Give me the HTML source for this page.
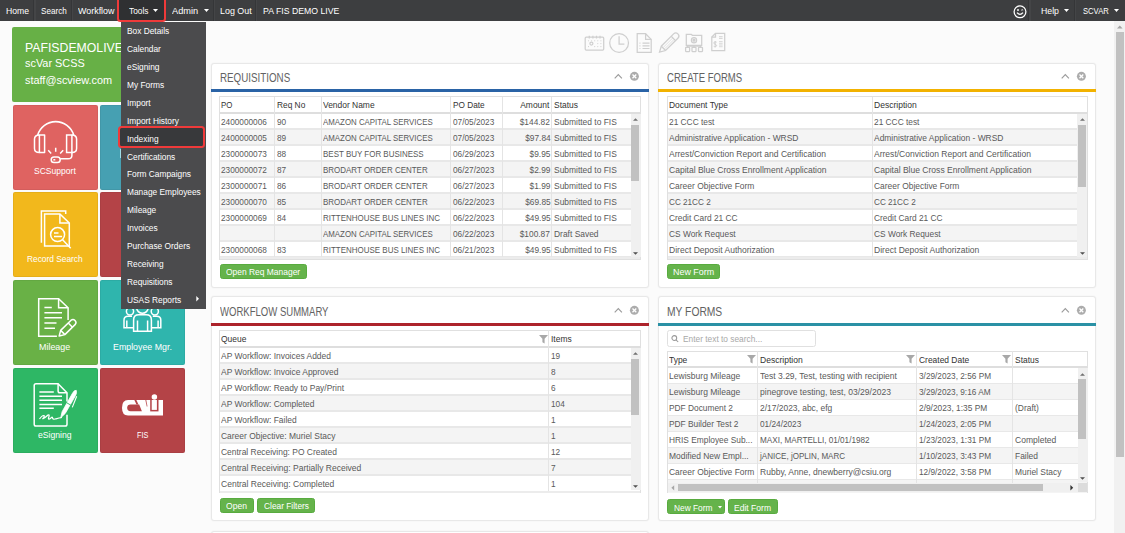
<!DOCTYPE html><html><head><meta charset="utf-8"><style>
*{box-sizing:border-box;margin:0;padding:0}
html,body{width:1125px;height:533px;overflow:hidden;background:#fbfbfb;font-family:"Liberation Sans",sans-serif;color:#555;position:relative}
.a{position:absolute}
.t{position:absolute;white-space:nowrap;line-height:1}
svg{position:absolute;overflow:visible}
</style></head><body>
<div class="a" style="left:0px;top:0px;width:1125px;height:21px;background:#3d3e40;"></div>
<div class="a" style="left:33px;top:0px;width:1px;height:21px;background:#353638;"></div>
<div class="a" style="left:34px;top:0px;width:1.7px;height:21px;background:#444547;"></div>
<div class="a" style="left:70.7px;top:0px;width:1px;height:21px;background:#353638;"></div>
<div class="a" style="left:71.7px;top:0px;width:1.7px;height:21px;background:#444547;"></div>
<div class="a" style="left:212.7px;top:0px;width:1px;height:21px;background:#353638;"></div>
<div class="a" style="left:213.7px;top:0px;width:1.7px;height:21px;background:#444547;"></div>
<div class="a" style="left:254.8px;top:0px;width:1px;height:21px;background:#353638;"></div>
<div class="a" style="left:255.8px;top:0px;width:1.7px;height:21px;background:#444547;"></div>
<div class="a" style="left:1028.3px;top:0px;width:1px;height:21px;background:#353638;"></div>
<div class="a" style="left:1029.3px;top:0px;width:1.7px;height:21px;background:#444547;"></div>
<div class="a" style="left:1073.5px;top:0px;width:1px;height:21px;background:#353638;"></div>
<div class="a" style="left:1074.5px;top:0px;width:1.7px;height:21px;background:#444547;"></div>
<div class="a" style="left:118.5px;top:0px;width:46.5px;height:21px;background:#2f3032;"></div>
<div class="t" style="left:6px;top:5.7px;font-size:9.8px;color:#fff;transform:scaleX(0.88);transform-origin:0 0;">Home</div>
<div class="t" style="left:40.7px;top:5.7px;font-size:9.8px;color:#fff;transform:scaleX(0.83);transform-origin:0 0;">Search</div>
<div class="t" style="left:78px;top:5.7px;font-size:9.8px;color:#fff;transform:scaleX(0.91);transform-origin:0 0;">Workflow</div>
<div class="t" style="left:128.6px;top:5.7px;font-size:9.8px;color:#fff;transform:scaleX(0.85);transform-origin:0 0;">Tools</div>
<div class="t" style="left:172px;top:5.7px;font-size:9.8px;color:#fff;transform:scaleX(0.94);transform-origin:0 0;">Admin</div>
<div class="t" style="left:219.6px;top:5.7px;font-size:9.8px;color:#fff;transform:scaleX(0.91);transform-origin:0 0;">Log Out</div>
<div class="t" style="left:262.6px;top:5.7px;font-size:9.8px;color:#fff;transform:scaleX(0.89);transform-origin:0 0;">PA FIS DEMO LIVE</div>
<div class="t" style="left:1041px;top:5.7px;font-size:9.8px;color:#fff;transform:scaleX(0.89);transform-origin:0 0;">Help</div>
<div class="t" style="left:1083px;top:5.7px;font-size:9.8px;color:#fff;transform:scaleX(0.78);transform-origin:0 0;">SCVAR</div>
<svg style="left:153px;top:9.3px" width="5" height="3"><path d="M0 0H5L2.5 3Z" fill="#fff"/></svg>
<svg style="left:203.5px;top:9.3px" width="5" height="3"><path d="M0 0H5L2.5 3Z" fill="#fff"/></svg>
<svg style="left:1064px;top:9.3px" width="5" height="3"><path d="M0 0H5L2.5 3Z" fill="#fff"/></svg>
<svg style="left:1113.6px;top:9.3px" width="5" height="3"><path d="M0 0H5L2.5 3Z" fill="#fff"/></svg>
<svg style="left:1012.5px;top:5px" width="15" height="14" viewBox="0 0 15 14"><circle cx="7" cy="6.8" r="5.9" fill="none" stroke="#fff" stroke-width="1.25"/><path d="M4 7.6 Q7 11 10 7.6" fill="none" stroke="#fff" stroke-width="1.3"/><circle cx="5" cy="5" r="0.95" fill="#fff"/><path d="M8.3 5.2 Q9.2 4.3 10.1 5.2" fill="none" stroke="#fff" stroke-width="1"/></svg>
<div class="a" style="left:1114px;top:21px;width:11px;height:512px;background:#f1f1f1;"></div>
<div class="a" style="left:1116px;top:32px;width:7.8px;height:425.3px;background:#c1c1c1;"></div>
<svg style="left:1116.6px;top:25px" width="6" height="4"><path d="M0 3.4H5.6L2.8 0.4Z" fill="#a3a3a3"/></svg>
<svg style="left:0;top:0" width="1125" height="60" viewBox="0 0 1125 60" fill="none" stroke="#cfcfcf" stroke-width="1.25">
<rect x="585.2" y="37.2" width="18.5" height="12.8" rx="1"/>
<path d="M589.3 35.8v2.6M592.9 35.8v2.6M596.5 35.8v2.6M600 35.8v2.6"/>
<g fill="#cfcfcf" stroke="none">
<circle cx="588.5" cy="40.8" r=".55"/><circle cx="591.6" cy="40.8" r=".55"/><circle cx="594.7" cy="40.8" r=".55"/><circle cx="597.8" cy="40.8" r=".55"/><circle cx="600.9" cy="40.8" r=".55"/>
<circle cx="597.8" cy="43.6" r=".55"/><circle cx="600.9" cy="43.6" r=".55"/>
<circle cx="588.5" cy="46.6" r=".55"/><circle cx="594.7" cy="46.6" r=".55"/><circle cx="597.8" cy="46.6" r=".55"/><circle cx="600.9" cy="46.6" r=".55"/></g>
<circle cx="591.4" cy="43.6" r="1.5"/>
<circle cx="619.1" cy="43" r="9.4"/>
<path d="M619.1 36.3v7.7h5.3"/>
<path d="M637.2 33.7h8.4l5.6 5.7v13h-14z"/><path d="M645.6 33.7v5.7h5.6"/>
<path d="M642.5 43.2h7M642.5 45.9h7M642.5 48.5h7M639.5 43.2h.9M639.5 45.9h.9M639.5 48.5h.9" stroke-width="1.2"/>
<path d="M659.5 52.2 L661.3 46.2 L673.6 33.9 A2.6 2.6 0 0 1 677.9 38.2 L665.6 50.5 Z"/><path d="M661.3 46.2 L665.6 50.5 M671.2 36.3 L675.5 40.6"/>
<path d="M663.5 47.2 L672.7 38 M664.9 48.6 L674.1 39.4" stroke-width=".6"/>
<path d="M686.3 34.3h5l1 1h9.4v10h-15.4z"/><circle cx="694" cy="40.2" r="2.6"/><circle cx="694" cy="40.2" r="1" fill="#cfcfcf"/>
<path d="M686.5 46h15M687.5 46v1M694 46v1M700.5 46v1"/>
<rect x="685.6" y="47.3" width="4" height="4.2" rx=".4"/><rect x="692" y="47.3" width="4" height="4.2" rx=".4"/><rect x="698.5" y="47.3" width="4" height="4.2" rx=".4"/>
<path d="M715.5 33.3h9.2v17.4h-12.9v-13.7z"/><path d="M715.5 33.3v3.7h-3.7"/>
<path d="M719 36.7h3.6M719 38.4h3.6" stroke-width=".9"/>
<path d="M719 41.6h3.6M719 43.3h3.6M719 45h3.6M719 46.7h3.6" stroke-width=".8"/>
<path d="M716.6 42.2c-.6-.5-2.8-.7-2.8.8 0 1.5 2.8 1.1 2.8 2.6 0 1.3-2.2 1.4-2.9.7M715.2 41v6.3" stroke-width="1"/>
</svg>
<div class="a" style="left:12.2px;top:27.2px;width:172.8px;height:74.6px;background:#67b046;border-radius:2px"></div>
<div class="t" style="left:25px;top:40.53px;font-size:13.2px;color:#fff;transform:scaleX(0.93);transform-origin:0 0;">PAFISDEMOLIVE</div>
<div class="t" style="left:25px;top:58.47px;font-size:10.9px;color:#fff;transform:scaleX(1);transform-origin:0 0;">scVar SCSS</div>
<div class="t" style="left:25px;top:74.77px;font-size:10.9px;color:#fff;transform:scaleX(1);transform-origin:0 0;">staff@scview.com</div>
<div class="a" style="left:12.5px;top:104.5px;width:85px;height:85px;background:#df6361;border-radius:2px;box-shadow:inset 0 0 0 1px rgba(0,0,0,0.05)"></div>
<svg style="left:0;top:0" width="1125" height="533" viewBox="0 0 1125 533" fill="none" stroke="#fff" stroke-width="1.5">
<path d="M37.7 135 A18.8 18.8 0 0 1 73.7 135" stroke-width="1.6"/>
<path d="M39.4 134.9 H44.6 V152.5 H39.4 Z" stroke-linejoin="round"/>
<path d="M39.4 134.9 Q34.5 135 34.5 139 V148.5 Q34.5 152.5 39.4 152.5"/>
<path d="M71.9 134.9 H66.6 V152.5 H71.9 Z"/>
<path d="M71.9 134.9 Q76.6 135 76.6 139 V148.5 Q76.6 152.5 71.9 152.5"/>
<path d="M71.9 152.5 V155.5 Q71.9 158.8 68 158.8 H60.2"/>
<rect x="51.2" y="157" width="9" height="5.6" rx="2.8"/>
<path d="M53.3 159.8 H55.3"/>
<path d="M55.7 147.8 V151.8 M48.2 150.2 L51.2 153.4 M63.2 150.2 L60.2 153.4"/>
</svg>
<div class="t" style="left:34px;top:166.37px;font-size:9.6px;color:#fff;transform:scaleX(0.89);transform-origin:0 0;">SCSupport</div>
<div class="a" style="left:100px;top:104.5px;width:85px;height:85px;background:#46a0b2;border-radius:2px;box-shadow:inset 0 0 0 1px rgba(0,0,0,0.05)"></div>
<div class="a" style="left:119.6px;top:149px;width:1.4px;height:8.5px;background:#9fdde8;"></div>
<div class="a" style="left:12.5px;top:192px;width:85px;height:85px;background:#f2b81c;border-radius:2px;box-shadow:inset 0 0 0 1px rgba(0,0,0,0.05)"></div>
<svg style="left:0;top:0" width="1125" height="533" viewBox="0 0 1125 533" fill="none" stroke="#fff" stroke-width="1.5">
<path d="M41.4 242.8 V210.9 H65.7 V214"/>
<path d="M44.6 214 H59.9 L69.3 223 V246 H44.6 Z"/>
<path d="M59.9 214 V223 H69.3"/>
<circle cx="57.6" cy="234.6" r="7"/>
<path d="M54 232.9 H58.5 M54 236.5 H62.1"/>
<path d="M62.6 239.8 L70.7 248.2"/>
</svg>
<div class="t" style="left:27.15px;top:253.87px;font-size:9.6px;color:#fff;transform:scaleX(0.87);transform-origin:0 0;">Record Search</div>
<div class="a" style="left:100px;top:192px;width:85px;height:85px;background:#b44347;border-radius:2px;box-shadow:inset 0 0 0 1px rgba(0,0,0,0.05)"></div>
<div class="a" style="left:12.5px;top:280px;width:85px;height:85px;background:#69b146;border-radius:2px;box-shadow:inset 0 0 0 1px rgba(0,0,0,0.05)"></div>
<svg style="left:0;top:0" width="1125" height="533" viewBox="0 0 1125 533" fill="none" stroke="#fff" stroke-width="1.5">
<path d="M56.9 336.3 H38.7 V298.7 H58.6 L68.1 307.8 V320"/>
<path d="M58.6 298.7 V307.8 H68.1"/>
<path d="M44.4 307.6 H51.8 M44.4 312.7 H62 M44.4 317.8 H62 M44.4 323 H56.5 M44.4 328.2 H55"/>
<path d="M59.2 336 L60.67 330.36 L71.1 320.2 A3 3 0 0 1 75.3 324.4 L64.87 334.64 Z" stroke-linejoin="round"/>
<path d="M60.67 330.36 L64.87 334.64 M68.24 322.96 L72.44 327.24"/>
</svg>
<div class="t" style="left:39.35px;top:341.87px;font-size:9.6px;color:#fff;transform:scaleX(0.93);transform-origin:0 0;">Mileage</div>
<div class="a" style="left:100px;top:280px;width:85px;height:85px;background:#2fb5ad;border-radius:2px;box-shadow:inset 0 0 0 1px rgba(0,0,0,0.05)"></div>
<svg style="left:0;top:0" width="1125" height="533" viewBox="0 0 1125 533" fill="none" stroke="#fff" stroke-width="1.5">
<circle cx="142.4" cy="307.5" r="5.8"/>
<circle cx="130" cy="311.3" r="3.6"/>
<circle cx="154.8" cy="311.3" r="3.6"/>
<path d="M133.6 331.3 V320 Q133.6 314.8 138.8 314.8 H146.2 Q151.4 314.8 151.4 320 V331.3 Z"/>
<path d="M137.5 320.5 V331 M147.6 320.5 V331"/>
<path d="M133.2 327.8 H124 V320 Q124 316.2 128 316.2 H132"/>
<path d="M151.8 327.8 H160.8 V320 Q160.8 316.2 156.8 316.2 H152.8"/>
<path d="M126.8 320.5 V327.5 M158.1 320.5 V327.5"/>
</svg>
<div class="t" style="left:113.1px;top:341.87px;font-size:9.6px;color:#fff;transform:scaleX(0.92);transform-origin:0 0;">Employee Mgr.</div>
<div class="a" style="left:12.5px;top:368px;width:85px;height:85px;background:#2eb765;border-radius:2px;box-shadow:inset 0 0 0 1px rgba(0,0,0,0.05)"></div>
<svg style="left:0;top:0" width="1125" height="533" viewBox="0 0 1125 533" fill="none" stroke="#fff" stroke-width="1.5">
<path d="M67 401.6 V392.7 L58.1 383.8 H36 Q34.2 383.8 34.2 385.6 V424.2 Q34.2 426 36 426 H65.2 Q67 426 67 424.2 V414.7"/>
<path d="M58.1 383.8 V390.9 Q58.1 392.7 59.9 392.7 H67"/>
<path d="M39.4 392 H53.8 M39.4 396.2 H62 M39.4 400.3 H62 M39.4 404.5 H62 M39.4 408.3 H53.8"/>
<path d="M39.5 419 Q42 415.2 44 415.5 Q45 416.5 42.5 419 Q46 417 48 415 Q50 414 48.5 418 Q48 420.5 51 418 Q52.5 416 52.5 418 Q53 420 56 418.8 Q59 418 62 417.5" stroke-width="1.2"/>
<path d="M60.7 417.8 L62.1 411.69 L72.42 393.36 Q74.5 389.5 76.3 390.4 Q77 392 75.72 395.24 L65.24 413.47 Z" fill="#fff" stroke-width="0.8"/>
<path d="M66.5 402.7 L70.8 405.1" stroke="#2eb765" stroke-width="0.9"/>
<path d="M76.7 396.3 L72.3 407.4" stroke-width="1.1"/>
</svg>
<div class="t" style="left:38.1px;top:429.87px;font-size:9.6px;color:#fff;transform:scaleX(0.9);transform-origin:0 0;">eSigning</div>
<div class="a" style="left:100px;top:368px;width:85px;height:85px;background:#b44347;border-radius:2px;box-shadow:inset 0 0 0 1px rgba(0,0,0,0.05)"></div>
<svg style="left:0;top:0" width="1125" height="533" viewBox="0 0 1125 533" fill="none" stroke="#fff" stroke-width="1.5"><g stroke="none">
<path d="M128 400 H163 V415.6 H128 Q122 415.6 122 407.8 Q122 400 128 400 Z" fill="#fff"/>
<path d="M130.6 404.4 H139.2 L141.9 411.3 H130.6 A3.45 3.45 0 0 1 130.6 404.4 Z" fill="#b44347"/>
<path d="M134.4 400 H136.4 L138.4 404.4 H136.4 Z" fill="#b44347"/>
<path d="M145.3 400 H146.3 L147.5 406.5 H146.7 Z" fill="#c26266"/>
<rect x="150.2" y="400" width="8.3" height="11.4" fill="#b44347"/>
<rect x="151.7" y="400" width="5.2" height="9.9" fill="#fff"/>
<circle cx="154.4" cy="396.9" r="2.75" fill="#fff"/>
</g></svg>
<div class="t" style="left:136.85px;top:429.87px;font-size:9.6px;color:#fff;transform:scaleX(0.76);transform-origin:0 0;">FIS</div>
<div class="a" style="left:211px;top:63px;width:437.8px;height:224.6px;background:#fff;border:1px solid #e8e8e8;border-radius:3px;box-shadow:0 0 1.5px rgba(0,0,0,.07)"></div>
<div class="t" style="left:219.6px;top:71.85px;font-size:12.4px;color:#626262;transform:scaleX(0.79);transform-origin:0 0;">REQUISITIONS</div>
<div class="a" style="left:211px;top:89.4px;width:437.8px;height:2.7px;background:#2a63a6;"></div>
<svg style="left:0;top:0" width="1125" height="533" viewBox="0 0 1125 533"><path d="M614.7 78.35 L618.3 74.55 L621.9 78.35" fill="none" stroke="#9c9c9c" stroke-width="1.15"/><circle cx="634.4" cy="76.35" r="4.5" fill="#acacac"/><path d="M632.5 74.45 l3.8 3.8 M636.3 74.45 l-3.8 3.8" stroke="#fff" stroke-width="1.3"/></svg>
<div class="a" style="left:219.2px;top:96px;width:421.6px;height:163.8px;background:#fff;border:1px solid #e0e0e0"></div>
<div class="a" style="left:220.2px;top:129.3px;width:419.6px;height:16px;background:#f4f4f4;"></div>
<div class="a" style="left:220.2px;top:161.3px;width:419.6px;height:16px;background:#f4f4f4;"></div>
<div class="a" style="left:220.2px;top:193.3px;width:419.6px;height:16px;background:#f4f4f4;"></div>
<div class="a" style="left:220.2px;top:225.3px;width:419.6px;height:16px;background:#f4f4f4;"></div>
<div class="a" style="left:220.2px;top:128.4px;width:419.6px;height:1.5px;background:#e8e8e8;"></div>
<div class="a" style="left:220.2px;top:144.4px;width:419.6px;height:1.5px;background:#e8e8e8;"></div>
<div class="a" style="left:220.2px;top:160.4px;width:419.6px;height:1.5px;background:#e8e8e8;"></div>
<div class="a" style="left:220.2px;top:176.4px;width:419.6px;height:1.5px;background:#e8e8e8;"></div>
<div class="a" style="left:220.2px;top:192.4px;width:419.6px;height:1.5px;background:#e8e8e8;"></div>
<div class="a" style="left:220.2px;top:208.4px;width:419.6px;height:1.5px;background:#e8e8e8;"></div>
<div class="a" style="left:220.2px;top:224.4px;width:419.6px;height:1.5px;background:#e8e8e8;"></div>
<div class="a" style="left:220.2px;top:240.4px;width:419.6px;height:1.5px;background:#e8e8e8;"></div>
<div class="a" style="left:220.2px;top:256.4px;width:419.6px;height:1.5px;background:#e8e8e8;"></div>
<div class="a" style="left:220.2px;top:257.3px;width:419.6px;height:2px;background:#ececec;"></div>
<div class="a" style="left:220.2px;top:112px;width:419.6px;height:1.5px;background:#dedede;"></div>
<div class="a" style="left:274px;top:96.5px;width:1px;height:160.8px;background:#e4e4e4;"></div>
<div class="a" style="left:320.5px;top:96.5px;width:1px;height:160.8px;background:#e4e4e4;"></div>
<div class="a" style="left:450px;top:96.5px;width:1px;height:160.8px;background:#e4e4e4;"></div>
<div class="a" style="left:501.5px;top:96.5px;width:1px;height:160.8px;background:#e4e4e4;"></div>
<div class="a" style="left:551px;top:96.5px;width:1px;height:160.8px;background:#e4e4e4;"></div>
<div class="t" style="left:221.3px;top:100.34px;font-size:9.4px;color:#333;transform:scaleX(0.84);transform-origin:0 0;">PO</div>
<div class="t" style="left:276.6px;top:100.34px;font-size:9.4px;color:#333;transform:scaleX(0.89);transform-origin:0 0;">Req No</div>
<div class="t" style="left:323.1px;top:100.34px;font-size:9.4px;color:#333;transform:scaleX(0.9);transform-origin:0 0;">Vendor Name</div>
<div class="t" style="left:452.6px;top:100.34px;font-size:9.4px;color:#333;transform:scaleX(0.88);transform-origin:0 0;">PO Date</div>
<div class="t" style="right:575.3px;top:100.34px;font-size:9.4px;color:#333;transform:scaleX(0.9);transform-origin:100% 0;">Amount</div>
<div class="t" style="left:553.6px;top:100.34px;font-size:9.4px;color:#333;transform:scaleX(0.9);transform-origin:0 0;">Status</div>
<div class="t" style="left:221.3px;top:116.74px;font-size:9.4px;color:#595959;transform:scaleX(0.88);transform-origin:0 0;">2400000006</div>
<div class="t" style="left:276.6px;top:116.74px;font-size:9.4px;color:#595959;transform:scaleX(0.88);transform-origin:0 0;">90</div>
<div class="t" style="left:323.1px;top:116.74px;font-size:9.4px;color:#595959;transform:scaleX(0.84);transform-origin:0 0;">AMAZON CAPITAL SERVICES</div>
<div class="t" style="left:452.6px;top:116.74px;font-size:9.4px;color:#595959;transform:scaleX(0.88);transform-origin:0 0;">07/05/2023</div>
<div class="t" style="right:574.7px;top:116.74px;font-size:9.4px;color:#595959;transform:scaleX(0.89);transform-origin:100% 0;">$144.82</div>
<div class="t" style="left:553.6px;top:116.74px;font-size:9.4px;color:#595959;transform:scaleX(0.9);transform-origin:0 0;">Submitted to FIS</div>
<div class="t" style="left:221.3px;top:132.74px;font-size:9.4px;color:#595959;transform:scaleX(0.88);transform-origin:0 0;">2400000005</div>
<div class="t" style="left:276.6px;top:132.74px;font-size:9.4px;color:#595959;transform:scaleX(0.88);transform-origin:0 0;">89</div>
<div class="t" style="left:323.1px;top:132.74px;font-size:9.4px;color:#595959;transform:scaleX(0.84);transform-origin:0 0;">AMAZON CAPITAL SERVICES</div>
<div class="t" style="left:452.6px;top:132.74px;font-size:9.4px;color:#595959;transform:scaleX(0.88);transform-origin:0 0;">07/05/2023</div>
<div class="t" style="right:574.7px;top:132.74px;font-size:9.4px;color:#595959;transform:scaleX(0.89);transform-origin:100% 0;">$97.84</div>
<div class="t" style="left:553.6px;top:132.74px;font-size:9.4px;color:#595959;transform:scaleX(0.9);transform-origin:0 0;">Submitted to FIS</div>
<div class="t" style="left:221.3px;top:148.74px;font-size:9.4px;color:#595959;transform:scaleX(0.88);transform-origin:0 0;">2300000073</div>
<div class="t" style="left:276.6px;top:148.74px;font-size:9.4px;color:#595959;transform:scaleX(0.88);transform-origin:0 0;">88</div>
<div class="t" style="left:323.1px;top:148.74px;font-size:9.4px;color:#595959;transform:scaleX(0.85);transform-origin:0 0;">BEST BUY FOR BUSINESS</div>
<div class="t" style="left:452.6px;top:148.74px;font-size:9.4px;color:#595959;transform:scaleX(0.88);transform-origin:0 0;">06/29/2023</div>
<div class="t" style="right:574.7px;top:148.74px;font-size:9.4px;color:#595959;transform:scaleX(0.89);transform-origin:100% 0;">$9.95</div>
<div class="t" style="left:553.6px;top:148.74px;font-size:9.4px;color:#595959;transform:scaleX(0.9);transform-origin:0 0;">Submitted to FIS</div>
<div class="t" style="left:221.3px;top:164.74px;font-size:9.4px;color:#595959;transform:scaleX(0.88);transform-origin:0 0;">2300000072</div>
<div class="t" style="left:276.6px;top:164.74px;font-size:9.4px;color:#595959;transform:scaleX(0.88);transform-origin:0 0;">87</div>
<div class="t" style="left:323.1px;top:164.74px;font-size:9.4px;color:#595959;transform:scaleX(0.85);transform-origin:0 0;">BRODART ORDER CENTER</div>
<div class="t" style="left:452.6px;top:164.74px;font-size:9.4px;color:#595959;transform:scaleX(0.88);transform-origin:0 0;">06/27/2023</div>
<div class="t" style="right:574.7px;top:164.74px;font-size:9.4px;color:#595959;transform:scaleX(0.89);transform-origin:100% 0;">$2.99</div>
<div class="t" style="left:553.6px;top:164.74px;font-size:9.4px;color:#595959;transform:scaleX(0.9);transform-origin:0 0;">Submitted to FIS</div>
<div class="t" style="left:221.3px;top:180.74px;font-size:9.4px;color:#595959;transform:scaleX(0.88);transform-origin:0 0;">2300000071</div>
<div class="t" style="left:276.6px;top:180.74px;font-size:9.4px;color:#595959;transform:scaleX(0.88);transform-origin:0 0;">86</div>
<div class="t" style="left:323.1px;top:180.74px;font-size:9.4px;color:#595959;transform:scaleX(0.85);transform-origin:0 0;">BRODART ORDER CENTER</div>
<div class="t" style="left:452.6px;top:180.74px;font-size:9.4px;color:#595959;transform:scaleX(0.88);transform-origin:0 0;">06/27/2023</div>
<div class="t" style="right:574.7px;top:180.74px;font-size:9.4px;color:#595959;transform:scaleX(0.89);transform-origin:100% 0;">$1.99</div>
<div class="t" style="left:553.6px;top:180.74px;font-size:9.4px;color:#595959;transform:scaleX(0.9);transform-origin:0 0;">Submitted to FIS</div>
<div class="t" style="left:221.3px;top:196.74px;font-size:9.4px;color:#595959;transform:scaleX(0.88);transform-origin:0 0;">2300000070</div>
<div class="t" style="left:276.6px;top:196.74px;font-size:9.4px;color:#595959;transform:scaleX(0.88);transform-origin:0 0;">85</div>
<div class="t" style="left:323.1px;top:196.74px;font-size:9.4px;color:#595959;transform:scaleX(0.85);transform-origin:0 0;">BRODART ORDER CENTER</div>
<div class="t" style="left:452.6px;top:196.74px;font-size:9.4px;color:#595959;transform:scaleX(0.88);transform-origin:0 0;">06/22/2023</div>
<div class="t" style="right:574.7px;top:196.74px;font-size:9.4px;color:#595959;transform:scaleX(0.89);transform-origin:100% 0;">$69.85</div>
<div class="t" style="left:553.6px;top:196.74px;font-size:9.4px;color:#595959;transform:scaleX(0.9);transform-origin:0 0;">Submitted to FIS</div>
<div class="t" style="left:221.3px;top:212.74px;font-size:9.4px;color:#595959;transform:scaleX(0.88);transform-origin:0 0;">2300000069</div>
<div class="t" style="left:276.6px;top:212.74px;font-size:9.4px;color:#595959;transform:scaleX(0.88);transform-origin:0 0;">84</div>
<div class="t" style="left:323.1px;top:212.74px;font-size:9.4px;color:#595959;transform:scaleX(0.85);transform-origin:0 0;">RITTENHOUSE BUS LINES INC</div>
<div class="t" style="left:452.6px;top:212.74px;font-size:9.4px;color:#595959;transform:scaleX(0.88);transform-origin:0 0;">06/22/2023</div>
<div class="t" style="right:574.7px;top:212.74px;font-size:9.4px;color:#595959;transform:scaleX(0.89);transform-origin:100% 0;">$49.95</div>
<div class="t" style="left:553.6px;top:212.74px;font-size:9.4px;color:#595959;transform:scaleX(0.9);transform-origin:0 0;">Submitted to FIS</div>
<div class="t" style="left:323.1px;top:228.74px;font-size:9.4px;color:#595959;transform:scaleX(0.84);transform-origin:0 0;">AMAZON CAPITAL SERVICES</div>
<div class="t" style="left:452.6px;top:228.74px;font-size:9.4px;color:#595959;transform:scaleX(0.88);transform-origin:0 0;">06/22/2023</div>
<div class="t" style="right:574.7px;top:228.74px;font-size:9.4px;color:#595959;transform:scaleX(0.89);transform-origin:100% 0;">$100.87</div>
<div class="t" style="left:553.6px;top:228.74px;font-size:9.4px;color:#595959;transform:scaleX(0.9);transform-origin:0 0;">Draft Saved</div>
<div class="t" style="left:221.3px;top:244.74px;font-size:9.4px;color:#595959;transform:scaleX(0.88);transform-origin:0 0;">2300000068</div>
<div class="t" style="left:276.6px;top:244.74px;font-size:9.4px;color:#595959;transform:scaleX(0.88);transform-origin:0 0;">83</div>
<div class="t" style="left:323.1px;top:244.74px;font-size:9.4px;color:#595959;transform:scaleX(0.85);transform-origin:0 0;">RITTENHOUSE BUS LINES INC</div>
<div class="t" style="left:452.6px;top:244.74px;font-size:9.4px;color:#595959;transform:scaleX(0.88);transform-origin:0 0;">06/21/2023</div>
<div class="t" style="right:574.7px;top:244.74px;font-size:9.4px;color:#595959;transform:scaleX(0.89);transform-origin:100% 0;">$49.95</div>
<div class="t" style="left:553.6px;top:244.74px;font-size:9.4px;color:#595959;transform:scaleX(0.9);transform-origin:0 0;">Submitted to FIS</div>
<div class="a" style="left:630.5px;top:113.8px;width:10.2px;height:143.2px;background:#f0f0f0;"></div>
<svg style="left:633.1px;top:118.4px" width="6" height="4"><path d="M0 2.8H5L2.5 0.2Z" fill="#707070"/></svg>
<svg style="left:633.1px;top:251.8px" width="6" height="4"><path d="M0 0.2H5L2.5 2.8Z" fill="#505050"/></svg>
<div class="a" style="left:631.4px;top:124.9px;width:7.8px;height:56.1px;background:#c1c1c1;"></div>
<div class="a" style="left:219.5px;top:263.5px;width:87.8px;height:15.8px;background:#65b34b;border-radius:2.5px;border:1px solid #58ab3f"></div>
<div class="t" style="left:226.2px;top:266.97px;font-size:9.6px;color:#fff;transform:scaleX(0.88);transform-origin:0 0;">Open Req Manager</div>
<div class="a" style="left:658.2px;top:63px;width:437.6px;height:224.6px;background:#fff;border:1px solid #e8e8e8;border-radius:3px;box-shadow:0 0 1.5px rgba(0,0,0,.07)"></div>
<div class="t" style="left:666.8px;top:71.85px;font-size:12.4px;color:#626262;transform:scaleX(0.77);transform-origin:0 0;">CREATE FORMS</div>
<div class="a" style="left:658.2px;top:89.4px;width:437.6px;height:2.7px;background:#f2b200;"></div>
<svg style="left:0;top:0" width="1125" height="533" viewBox="0 0 1125 533"><path d="M1061.7 78.35 L1065.3 74.55 L1068.9 78.35" fill="none" stroke="#9c9c9c" stroke-width="1.15"/><circle cx="1081.4" cy="76.35" r="4.5" fill="#acacac"/><path d="M1079.5 74.45 l3.8 3.8 M1083.3 74.45 l-3.8 3.8" stroke="#fff" stroke-width="1.3"/></svg>
<div class="a" style="left:666.7px;top:96px;width:421.1px;height:163.8px;background:#fff;border:1px solid #e0e0e0"></div>
<div class="a" style="left:667.7px;top:129.3px;width:419.1px;height:16px;background:#f4f4f4;"></div>
<div class="a" style="left:667.7px;top:161.3px;width:419.1px;height:16px;background:#f4f4f4;"></div>
<div class="a" style="left:667.7px;top:193.3px;width:419.1px;height:16px;background:#f4f4f4;"></div>
<div class="a" style="left:667.7px;top:225.3px;width:419.1px;height:16px;background:#f4f4f4;"></div>
<div class="a" style="left:667.7px;top:128.4px;width:419.1px;height:1.5px;background:#e8e8e8;"></div>
<div class="a" style="left:667.7px;top:144.4px;width:419.1px;height:1.5px;background:#e8e8e8;"></div>
<div class="a" style="left:667.7px;top:160.4px;width:419.1px;height:1.5px;background:#e8e8e8;"></div>
<div class="a" style="left:667.7px;top:176.4px;width:419.1px;height:1.5px;background:#e8e8e8;"></div>
<div class="a" style="left:667.7px;top:192.4px;width:419.1px;height:1.5px;background:#e8e8e8;"></div>
<div class="a" style="left:667.7px;top:208.4px;width:419.1px;height:1.5px;background:#e8e8e8;"></div>
<div class="a" style="left:667.7px;top:224.4px;width:419.1px;height:1.5px;background:#e8e8e8;"></div>
<div class="a" style="left:667.7px;top:240.4px;width:419.1px;height:1.5px;background:#e8e8e8;"></div>
<div class="a" style="left:667.7px;top:256.4px;width:419.1px;height:1.5px;background:#e8e8e8;"></div>
<div class="a" style="left:667.7px;top:257.3px;width:419.1px;height:2px;background:#ececec;"></div>
<div class="a" style="left:667.7px;top:112px;width:419.1px;height:1.5px;background:#dedede;"></div>
<div class="a" style="left:871.8px;top:96.5px;width:1px;height:160.8px;background:#e4e4e4;"></div>
<div class="t" style="left:668.8px;top:100.34px;font-size:9.4px;color:#333;transform:scaleX(0.9);transform-origin:0 0;">Document Type</div>
<div class="t" style="left:874.4px;top:100.34px;font-size:9.4px;color:#333;transform:scaleX(0.91);transform-origin:0 0;">Description</div>
<div class="t" style="left:668.8px;top:116.74px;font-size:9.4px;color:#595959;transform:scaleX(0.89);transform-origin:0 0;">21 CCC test</div>
<div class="t" style="left:874.4px;top:116.74px;font-size:9.4px;color:#595959;transform:scaleX(0.89);transform-origin:0 0;">21 CCC test</div>
<div class="t" style="left:668.8px;top:132.74px;font-size:9.4px;color:#595959;transform:scaleX(0.9);transform-origin:0 0;">Administrative Application - WRSD</div>
<div class="t" style="left:874.4px;top:132.74px;font-size:9.4px;color:#595959;transform:scaleX(0.9);transform-origin:0 0;">Administrative Application - WRSD</div>
<div class="t" style="left:668.8px;top:148.74px;font-size:9.4px;color:#595959;transform:scaleX(0.91);transform-origin:0 0;">Arrest/Conviction Report and Certification</div>
<div class="t" style="left:874.4px;top:148.74px;font-size:9.4px;color:#595959;transform:scaleX(0.91);transform-origin:0 0;">Arrest/Conviction Report and Certification</div>
<div class="t" style="left:668.8px;top:164.74px;font-size:9.4px;color:#595959;transform:scaleX(0.91);transform-origin:0 0;">Capital Blue Cross Enrollment Application</div>
<div class="t" style="left:874.4px;top:164.74px;font-size:9.4px;color:#595959;transform:scaleX(0.91);transform-origin:0 0;">Capital Blue Cross Enrollment Application</div>
<div class="t" style="left:668.8px;top:180.74px;font-size:9.4px;color:#595959;transform:scaleX(0.9);transform-origin:0 0;">Career Objective Form</div>
<div class="t" style="left:874.4px;top:180.74px;font-size:9.4px;color:#595959;transform:scaleX(0.9);transform-origin:0 0;">Career Objective Form</div>
<div class="t" style="left:668.8px;top:196.74px;font-size:9.4px;color:#595959;transform:scaleX(0.87);transform-origin:0 0;">CC 21CC 2</div>
<div class="t" style="left:874.4px;top:196.74px;font-size:9.4px;color:#595959;transform:scaleX(0.87);transform-origin:0 0;">CC 21CC 2</div>
<div class="t" style="left:668.8px;top:212.74px;font-size:9.4px;color:#595959;transform:scaleX(0.89);transform-origin:0 0;">Credit Card 21 CC</div>
<div class="t" style="left:874.4px;top:212.74px;font-size:9.4px;color:#595959;transform:scaleX(0.89);transform-origin:0 0;">Credit Card 21 CC</div>
<div class="t" style="left:668.8px;top:228.74px;font-size:9.4px;color:#595959;transform:scaleX(0.89);transform-origin:0 0;">CS Work Request</div>
<div class="t" style="left:874.4px;top:228.74px;font-size:9.4px;color:#595959;transform:scaleX(0.89);transform-origin:0 0;">CS Work Request</div>
<div class="t" style="left:668.8px;top:244.74px;font-size:9.4px;color:#595959;transform:scaleX(0.91);transform-origin:0 0;">Direct Deposit Authorization</div>
<div class="t" style="left:874.4px;top:244.74px;font-size:9.4px;color:#595959;transform:scaleX(0.91);transform-origin:0 0;">Direct Deposit Authorization</div>
<div class="a" style="left:1077.3px;top:113.8px;width:10.2px;height:143.2px;background:#f0f0f0;"></div>
<svg style="left:1079.9px;top:118.4px" width="6" height="4"><path d="M0 2.8H5L2.5 0.2Z" fill="#707070"/></svg>
<svg style="left:1079.9px;top:251.8px" width="6" height="4"><path d="M0 0.2H5L2.5 2.8Z" fill="#505050"/></svg>
<div class="a" style="left:1078.2px;top:124.9px;width:7.8px;height:62.1px;background:#c1c1c1;"></div>
<div class="a" style="left:666.6px;top:263.5px;width:53.4px;height:15.8px;background:#65b34b;border-radius:2.5px;border:1px solid #58ab3f"></div>
<div class="t" style="left:672.8px;top:266.97px;font-size:9.6px;color:#fff;transform:scaleX(0.93);transform-origin:0 0;">New Form</div>
<div class="a" style="left:211px;top:296px;width:437.8px;height:225px;background:#fff;border:1px solid #e8e8e8;border-radius:3px;box-shadow:0 0 1.5px rgba(0,0,0,.07)"></div>
<div class="t" style="left:219.6px;top:305.85px;font-size:12.4px;color:#626262;transform:scaleX(0.77);transform-origin:0 0;">WORKFLOW SUMMARY</div>
<div class="a" style="left:211px;top:323.4px;width:437.8px;height:2.7px;background:#ad232b;"></div>
<svg style="left:0;top:0" width="1125" height="533" viewBox="0 0 1125 533"><path d="M614.7 312.35 L618.3 308.55 L621.9 312.35" fill="none" stroke="#9c9c9c" stroke-width="1.15"/><circle cx="634.4" cy="310.35" r="4.5" fill="#acacac"/><path d="M632.5 308.45 l3.8 3.8 M636.3 308.45 l-3.8 3.8" stroke="#fff" stroke-width="1.3"/></svg>
<div class="a" style="left:219.2px;top:329.7px;width:421.6px;height:163.8px;background:#fff;border:1px solid #e0e0e0"></div>
<div class="a" style="left:220.2px;top:363.3px;width:419.6px;height:16px;background:#f4f4f4;"></div>
<div class="a" style="left:220.2px;top:395.3px;width:419.6px;height:16px;background:#f4f4f4;"></div>
<div class="a" style="left:220.2px;top:427.3px;width:419.6px;height:16px;background:#f4f4f4;"></div>
<div class="a" style="left:220.2px;top:459.3px;width:419.6px;height:16px;background:#f4f4f4;"></div>
<div class="a" style="left:220.2px;top:362.4px;width:419.6px;height:1.5px;background:#e8e8e8;"></div>
<div class="a" style="left:220.2px;top:378.4px;width:419.6px;height:1.5px;background:#e8e8e8;"></div>
<div class="a" style="left:220.2px;top:394.4px;width:419.6px;height:1.5px;background:#e8e8e8;"></div>
<div class="a" style="left:220.2px;top:410.4px;width:419.6px;height:1.5px;background:#e8e8e8;"></div>
<div class="a" style="left:220.2px;top:426.4px;width:419.6px;height:1.5px;background:#e8e8e8;"></div>
<div class="a" style="left:220.2px;top:442.4px;width:419.6px;height:1.5px;background:#e8e8e8;"></div>
<div class="a" style="left:220.2px;top:458.4px;width:419.6px;height:1.5px;background:#e8e8e8;"></div>
<div class="a" style="left:220.2px;top:474.4px;width:419.6px;height:1.5px;background:#e8e8e8;"></div>
<div class="a" style="left:220.2px;top:491px;width:419.6px;height:2px;background:#ececec;"></div>
<div class="a" style="left:220.2px;top:346px;width:419.6px;height:1.5px;background:#dedede;"></div>
<div class="a" style="left:548px;top:330.2px;width:1px;height:160.8px;background:#e4e4e4;"></div>
<div class="t" style="left:221.3px;top:334.04px;font-size:9.4px;color:#333;transform:scaleX(0.9);transform-origin:0 0;">Queue</div>
<div class="t" style="left:550.6px;top:334.04px;font-size:9.4px;color:#333;transform:scaleX(0.9);transform-origin:0 0;">Items</div>
<div class="t" style="left:221.3px;top:350.74px;font-size:9.4px;color:#595959;transform:scaleX(0.9);transform-origin:0 0;">AP Workflow: Invoices Added</div>
<div class="t" style="left:550.6px;top:350.74px;font-size:9.4px;color:#595959;transform:scaleX(0.88);transform-origin:0 0;">19</div>
<div class="t" style="left:221.3px;top:366.74px;font-size:9.4px;color:#595959;transform:scaleX(0.9);transform-origin:0 0;">AP Workflow: Invoice Approved</div>
<div class="t" style="left:550.6px;top:366.74px;font-size:9.4px;color:#595959;transform:scaleX(0.88);transform-origin:0 0;">8</div>
<div class="t" style="left:221.3px;top:382.74px;font-size:9.4px;color:#595959;transform:scaleX(0.9);transform-origin:0 0;">AP Workflow: Ready to Pay/Print</div>
<div class="t" style="left:550.6px;top:382.74px;font-size:9.4px;color:#595959;transform:scaleX(0.88);transform-origin:0 0;">6</div>
<div class="t" style="left:221.3px;top:398.74px;font-size:9.4px;color:#595959;transform:scaleX(0.9);transform-origin:0 0;">AP Workflow: Completed</div>
<div class="t" style="left:550.6px;top:398.74px;font-size:9.4px;color:#595959;transform:scaleX(0.88);transform-origin:0 0;">104</div>
<div class="t" style="left:221.3px;top:414.74px;font-size:9.4px;color:#595959;transform:scaleX(0.9);transform-origin:0 0;">AP Workflow: Failed</div>
<div class="t" style="left:550.6px;top:414.74px;font-size:9.4px;color:#595959;transform:scaleX(0.88);transform-origin:0 0;">1</div>
<div class="t" style="left:221.3px;top:430.74px;font-size:9.4px;color:#595959;transform:scaleX(0.9);transform-origin:0 0;">Career Objective: Muriel Stacy</div>
<div class="t" style="left:550.6px;top:430.74px;font-size:9.4px;color:#595959;transform:scaleX(0.88);transform-origin:0 0;">1</div>
<div class="t" style="left:221.3px;top:446.74px;font-size:9.4px;color:#595959;transform:scaleX(0.9);transform-origin:0 0;">Central Receiving: PO Created</div>
<div class="t" style="left:550.6px;top:446.74px;font-size:9.4px;color:#595959;transform:scaleX(0.88);transform-origin:0 0;">12</div>
<div class="t" style="left:221.3px;top:462.74px;font-size:9.4px;color:#595959;transform:scaleX(0.91);transform-origin:0 0;">Central Receiving: Partially Received</div>
<div class="t" style="left:550.6px;top:462.74px;font-size:9.4px;color:#595959;transform:scaleX(0.88);transform-origin:0 0;">7</div>
<div class="t" style="left:221.3px;top:478.74px;font-size:9.4px;color:#595959;transform:scaleX(0.91);transform-origin:0 0;">Central Receiving: Completed</div>
<div class="t" style="left:550.6px;top:478.74px;font-size:9.4px;color:#595959;transform:scaleX(0.88);transform-origin:0 0;">1</div>
<svg style="left:538.5px;top:334.6px" width="9" height="9" viewBox="0 0 9 9"><path d="M0 0H9L5.6 3.8V8.4L3.4 7.2V3.8Z" fill="#a8a8a8"/></svg>
<div class="a" style="left:630.5px;top:347.8px;width:10.2px;height:142.7px;background:#f0f0f0;"></div>
<svg style="left:633.1px;top:352.4px" width="6" height="4"><path d="M0 2.8H5L2.5 0.2Z" fill="#707070"/></svg>
<svg style="left:633.1px;top:485.3px" width="6" height="4"><path d="M0 0.2H5L2.5 2.8Z" fill="#505050"/></svg>
<div class="a" style="left:631.4px;top:358.8px;width:7.8px;height:56.2px;background:#c1c1c1;"></div>
<div class="a" style="left:219.6px;top:497.7px;width:34.7px;height:15.5px;background:#65b34b;border-radius:2.5px;border:1px solid #58ab3f"></div>
<div class="t" style="left:226.45px;top:501.17px;font-size:9.6px;color:#fff;transform:scaleX(0.89);transform-origin:0 0;">Open</div>
<div class="a" style="left:257px;top:497.7px;width:58px;height:15.5px;background:#65b34b;border-radius:2.5px;border:1px solid #58ab3f"></div>
<div class="t" style="left:263.5px;top:501.17px;font-size:9.6px;color:#fff;transform:scaleX(0.87);transform-origin:0 0;">Clear Filters</div>
<div class="a" style="left:658.2px;top:296px;width:437.6px;height:225.3px;background:#fff;border:1px solid #e8e8e8;border-radius:3px;box-shadow:0 0 1.5px rgba(0,0,0,.07)"></div>
<div class="t" style="left:666.8px;top:305.85px;font-size:12.4px;color:#626262;transform:scaleX(0.83);transform-origin:0 0;">MY FORMS</div>
<div class="a" style="left:658.2px;top:323.4px;width:437.6px;height:2.7px;background:#2a91a5;"></div>
<svg style="left:0;top:0" width="1125" height="533" viewBox="0 0 1125 533"><path d="M1061.7 312.35 L1065.3 308.55 L1068.9 312.35" fill="none" stroke="#9c9c9c" stroke-width="1.15"/><circle cx="1081.4" cy="310.35" r="4.5" fill="#acacac"/><path d="M1079.5 308.45 l3.8 3.8 M1083.3 308.45 l-3.8 3.8" stroke="#fff" stroke-width="1.3"/></svg>
<div class="a" style="left:666.8px;top:330.3px;width:148.8px;height:16.6px;background:#fff;border:1px solid #e0e0e0;border-radius:2.5px"></div>
<svg style="left:671.3px;top:335.4px" width="9" height="8" viewBox="0 0 9 8" fill="none" stroke="#999" stroke-width="1.05"><circle cx="3.3" cy="3" r="2.4"/><path d="M5 4.8L7.2 7"/></svg>
<div class="t" style="left:682.7px;top:334.24px;font-size:9.4px;color:#a8a8a8;transform:scaleX(0.89);transform-origin:0 0;">Enter text to search...</div>
<div class="a" style="left:666.7px;top:350.8px;width:421.1px;height:142.2px;background:#fff;border:1px solid #e0e0e0"></div>
<div class="a" style="left:667.7px;top:383.4px;width:419.1px;height:16px;background:#f4f4f4;"></div>
<div class="a" style="left:667.7px;top:415.4px;width:419.1px;height:16px;background:#f4f4f4;"></div>
<div class="a" style="left:667.7px;top:447.4px;width:419.1px;height:16px;background:#f4f4f4;"></div>
<div class="a" style="left:667.7px;top:479.4px;width:419.1px;height:13.6px;background:#f4f4f4;"></div>
<div class="a" style="left:667.7px;top:382.5px;width:419.1px;height:1.5px;background:#e8e8e8;"></div>
<div class="a" style="left:667.7px;top:398.5px;width:419.1px;height:1.5px;background:#e8e8e8;"></div>
<div class="a" style="left:667.7px;top:414.5px;width:419.1px;height:1.5px;background:#e8e8e8;"></div>
<div class="a" style="left:667.7px;top:430.5px;width:419.1px;height:1.5px;background:#e8e8e8;"></div>
<div class="a" style="left:667.7px;top:446.5px;width:419.1px;height:1.5px;background:#e8e8e8;"></div>
<div class="a" style="left:667.7px;top:462.5px;width:419.1px;height:1.5px;background:#e8e8e8;"></div>
<div class="a" style="left:667.7px;top:478.5px;width:419.1px;height:1.5px;background:#e8e8e8;"></div>
<div class="a" style="left:667.7px;top:366.1px;width:419.1px;height:1.5px;background:#dedede;"></div>
<div class="a" style="left:756.9px;top:351.3px;width:1px;height:131.4px;background:#e4e4e4;"></div>
<div class="a" style="left:916.1px;top:351.3px;width:1px;height:131.4px;background:#e4e4e4;"></div>
<div class="a" style="left:1011.9px;top:351.3px;width:1px;height:131.4px;background:#e4e4e4;"></div>
<div class="t" style="left:669.1px;top:355.14px;font-size:9.4px;color:#333;transform:scaleX(0.9);transform-origin:0 0;">Type</div>
<div class="t" style="left:759.5px;top:355.14px;font-size:9.4px;color:#333;transform:scaleX(0.91);transform-origin:0 0;">Description</div>
<div class="t" style="left:918.7px;top:355.14px;font-size:9.4px;color:#333;transform:scaleX(0.9);transform-origin:0 0;">Created Date</div>
<div class="t" style="left:1014.5px;top:355.14px;font-size:9.4px;color:#333;transform:scaleX(0.9);transform-origin:0 0;">Status</div>
<div class="t" style="left:669.1px;top:370.84px;font-size:9.4px;color:#595959;transform:scaleX(0.91);transform-origin:0 0;">Lewisburg Mileage</div>
<div class="t" style="left:759.5px;top:370.84px;font-size:9.4px;color:#595959;transform:scaleX(0.91);transform-origin:0 0;">Test 3.29, Test, testing with recipient</div>
<div class="t" style="left:918.7px;top:370.84px;font-size:9.4px;color:#595959;transform:scaleX(0.88);transform-origin:0 0;">3/29/2023, 2:56 PM</div>
<div class="t" style="left:669.1px;top:386.84px;font-size:9.4px;color:#595959;transform:scaleX(0.91);transform-origin:0 0;">Lewisburg Mileage</div>
<div class="t" style="left:759.5px;top:386.84px;font-size:9.4px;color:#595959;transform:scaleX(0.91);transform-origin:0 0;">pinegrove testing, test, 03/29/2023</div>
<div class="t" style="left:918.7px;top:386.84px;font-size:9.4px;color:#595959;transform:scaleX(0.88);transform-origin:0 0;">3/29/2023, 9:16 AM</div>
<div class="t" style="left:669.1px;top:402.84px;font-size:9.4px;color:#595959;transform:scaleX(0.89);transform-origin:0 0;">PDF Document 2</div>
<div class="t" style="left:759.5px;top:402.84px;font-size:9.4px;color:#595959;transform:scaleX(0.9);transform-origin:0 0;">2/17/2023, abc, efg</div>
<div class="t" style="left:918.7px;top:402.84px;font-size:9.4px;color:#595959;transform:scaleX(0.89);transform-origin:0 0;">2/9/2023, 1:35 PM</div>
<div class="t" style="left:1014.5px;top:402.84px;font-size:9.4px;color:#595959;transform:scaleX(0.9);transform-origin:0 0;">(Draft)</div>
<div class="t" style="left:669.1px;top:418.84px;font-size:9.4px;color:#595959;transform:scaleX(0.89);transform-origin:0 0;">PDF Builder Test 2</div>
<div class="t" style="left:759.5px;top:418.84px;font-size:9.4px;color:#595959;transform:scaleX(0.88);transform-origin:0 0;">01/24/2023</div>
<div class="t" style="left:918.7px;top:418.84px;font-size:9.4px;color:#595959;transform:scaleX(0.88);transform-origin:0 0;">1/24/2023, 2:05 PM</div>
<div class="t" style="left:669.1px;top:434.84px;font-size:9.4px;color:#595959;transform:scaleX(0.89);transform-origin:0 0;">HRIS Employee Sub...</div>
<div class="t" style="left:759.5px;top:434.84px;font-size:9.4px;color:#595959;transform:scaleX(0.87);transform-origin:0 0;">MAXI, MARTELLI, 01/01/1982</div>
<div class="t" style="left:918.7px;top:434.84px;font-size:9.4px;color:#595959;transform:scaleX(0.88);transform-origin:0 0;">1/23/2023, 1:31 PM</div>
<div class="t" style="left:1014.5px;top:434.84px;font-size:9.4px;color:#595959;transform:scaleX(0.91);transform-origin:0 0;">Completed</div>
<div class="t" style="left:669.1px;top:450.84px;font-size:9.4px;color:#595959;transform:scaleX(0.9);transform-origin:0 0;">Modified New Empl...</div>
<div class="t" style="left:759.5px;top:450.84px;font-size:9.4px;color:#595959;transform:scaleX(0.86);transform-origin:0 0;">jANICE, jOPLIN, MARC</div>
<div class="t" style="left:918.7px;top:450.84px;font-size:9.4px;color:#595959;transform:scaleX(0.88);transform-origin:0 0;">1/10/2023, 3:43 PM</div>
<div class="t" style="left:1014.5px;top:450.84px;font-size:9.4px;color:#595959;transform:scaleX(0.9);transform-origin:0 0;">Failed</div>
<div class="t" style="left:669.1px;top:466.84px;font-size:9.4px;color:#595959;transform:scaleX(0.9);transform-origin:0 0;">Career Objective Form</div>
<div class="t" style="left:759.5px;top:466.84px;font-size:9.4px;color:#595959;transform:scaleX(0.91);transform-origin:0 0;">Rubby, Anne, dnewberry@csiu.org</div>
<div class="t" style="left:918.7px;top:466.84px;font-size:9.4px;color:#595959;transform:scaleX(0.88);transform-origin:0 0;">12/9/2022, 3:58 PM</div>
<div class="t" style="left:1014.5px;top:466.84px;font-size:9.4px;color:#595959;transform:scaleX(0.9);transform-origin:0 0;">Muriel Stacy</div>
<svg style="left:746.9px;top:355.2px" width="9" height="9" viewBox="0 0 9 9"><path d="M0 0H9L5.6 3.8V8.4L3.4 7.2V3.8Z" fill="#a8a8a8"/></svg>
<svg style="left:905.6px;top:355.2px" width="9" height="9" viewBox="0 0 9 9"><path d="M0 0H9L5.6 3.8V8.4L3.4 7.2V3.8Z" fill="#a8a8a8"/></svg>
<svg style="left:1001.7px;top:355.2px" width="9" height="9" viewBox="0 0 9 9"><path d="M0 0H9L5.6 3.8V8.4L3.4 7.2V3.8Z" fill="#a8a8a8"/></svg>
<div class="a" style="left:1077.5px;top:367.9px;width:10.2px;height:114.6px;background:#f0f0f0;"></div>
<svg style="left:1080.1px;top:372.5px" width="6" height="4"><path d="M0 2.8H5L2.5 0.2Z" fill="#707070"/></svg>
<svg style="left:1080.1px;top:477.3px" width="6" height="4"><path d="M0 0.2H5L2.5 2.8Z" fill="#505050"/></svg>
<div class="a" style="left:1078.4px;top:378.9px;width:7.8px;height:60.1px;background:#c1c1c1;"></div>
<div class="a" style="left:668px;top:482.7px;width:409.5px;height:9.6px;background:#f0f0f0;"></div>
<div class="a" style="left:677.7px;top:483.6px;width:365.6px;height:7.8px;background:#c1c1c1;"></div>
<div class="a" style="left:1077.5px;top:482.7px;width:9.8px;height:9.6px;background:#dcdcdc;"></div>
<svg style="left:670.8px;top:485px" width="4" height="6"><path d="M3.2 0.2V5.4L0.4 2.8Z" fill="#a6a6a6"/></svg>
<svg style="left:1070.2px;top:485px" width="4" height="6"><path d="M0.4 0V5.6L3.2 2.8Z" fill="#333"/></svg>
<div class="a" style="left:666.6px;top:499.4px;width:58.4px;height:15px;background:#65b34b;border-radius:2.5px;border:1px solid #58ab3f"></div>
<div class="t" style="left:673.9px;top:502.87px;font-size:9.6px;color:#fff;transform:scaleX(0.87);transform-origin:0 0;">New Form</div>
<svg style="left:718.2px;top:506.3px" width="4" height="2.4"><path d="M0 0H4L2.0 2.4Z" fill="#fff"/></svg>
<div class="a" style="left:727.8px;top:499.4px;width:49.9px;height:15px;background:#65b34b;border-radius:2.5px;border:1px solid #58ab3f"></div>
<div class="t" style="left:734.25px;top:502.87px;font-size:9.6px;color:#fff;transform:scaleX(0.89);transform-origin:0 0;">Edit Form</div>
<div class="a" style="left:211px;top:530.6px;width:437.8px;height:14.4px;background:#fff;border:1px solid #e8e8e8;border-radius:3px;box-shadow:0 0 1.5px rgba(0,0,0,.07)"></div>
<div class="a" style="left:121px;top:22px;width:85.3px;height:286.6px;background:#4b4b4d;"></div>
<div class="a" style="left:118.5px;top:127.5px;width:85.5px;height:19.5px;background:#38393b;"></div>
<div class="t" style="left:126.6px;top:26.47px;font-size:9.6px;color:#fff;transform:scaleX(0.87);transform-origin:0 0;">Box Details</div>
<div class="t" style="left:126.6px;top:44.34px;font-size:9.6px;color:#fff;transform:scaleX(0.87);transform-origin:0 0;">Calendar</div>
<div class="t" style="left:126.6px;top:62.21px;font-size:9.6px;color:#fff;transform:scaleX(0.87);transform-origin:0 0;">eSigning</div>
<div class="t" style="left:126.6px;top:80.08px;font-size:9.6px;color:#fff;transform:scaleX(0.87);transform-origin:0 0;">My Forms</div>
<div class="t" style="left:126.6px;top:97.95px;font-size:9.6px;color:#fff;transform:scaleX(0.87);transform-origin:0 0;">Import</div>
<div class="t" style="left:126.6px;top:115.82px;font-size:9.6px;color:#fff;transform:scaleX(0.87);transform-origin:0 0;">Import History</div>
<div class="t" style="left:126.6px;top:133.69px;font-size:9.6px;color:#fff;transform:scaleX(0.87);transform-origin:0 0;">Indexing</div>
<div class="t" style="left:126.6px;top:151.56px;font-size:9.6px;color:#fff;transform:scaleX(0.87);transform-origin:0 0;">Certifications</div>
<div class="t" style="left:126.6px;top:169.43px;font-size:9.6px;color:#fff;transform:scaleX(0.87);transform-origin:0 0;">Form Campaigns</div>
<div class="t" style="left:126.6px;top:187.3px;font-size:9.6px;color:#fff;transform:scaleX(0.87);transform-origin:0 0;">Manage Employees</div>
<div class="t" style="left:126.6px;top:205.17px;font-size:9.6px;color:#fff;transform:scaleX(0.87);transform-origin:0 0;">Mileage</div>
<div class="t" style="left:126.6px;top:223.04px;font-size:9.6px;color:#fff;transform:scaleX(0.87);transform-origin:0 0;">Invoices</div>
<div class="t" style="left:126.6px;top:240.91px;font-size:9.6px;color:#fff;transform:scaleX(0.87);transform-origin:0 0;">Purchase Orders</div>
<div class="t" style="left:126.6px;top:258.78px;font-size:9.6px;color:#fff;transform:scaleX(0.87);transform-origin:0 0;">Receiving</div>
<div class="t" style="left:126.6px;top:276.65px;font-size:9.6px;color:#fff;transform:scaleX(0.87);transform-origin:0 0;">Requisitions</div>
<div class="t" style="left:126.6px;top:294.52px;font-size:9.6px;color:#fff;transform:scaleX(0.87);transform-origin:0 0;">USAS Reports</div>
<svg style="left:196.2px;top:296.2px" width="4" height="6"><path d="M0.3 0V5.4L3 2.7Z" fill="#fff"/></svg>
<div class="a" style="left:116.6px;top:-4px;width:49.1px;height:26.3px;background:transparent;border:2.5px solid #ef3a3a;border-radius:3.5px"></div>
<div class="a" style="left:117.9px;top:125.7px;width:86.8px;height:22.2px;background:transparent;border:2.5px solid #ef3a3a;border-radius:3.5px"></div>
</body></html>
